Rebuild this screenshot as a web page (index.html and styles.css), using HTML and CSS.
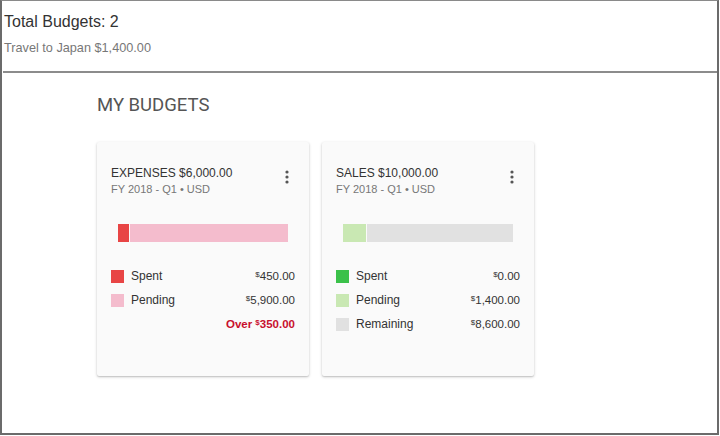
FILE: index.html
```html
<!DOCTYPE html>
<html>
<head>
<meta charset="utf-8">
<link rel="stylesheet" href="styles.css">
</head>
<body>
<div class="frame">
  <header class="summary">
    <div class="summary-title">Total Budgets: 2</div>
    <div class="summary-sub">Travel to Japan $1,400.00</div>
  </header>
  <main class="content">
    <h1 class="section-title">MY BUDGETS</h1>
    <div class="cards">
      <div class="card">
        <div class="card-head">
          <div>
            <div class="card-title">EXPENSES $6,000.00</div>
            <div class="card-sub">FY 2018 - Q1 &bull; USD</div>
          </div>
          <svg class="menu" width="4" height="14" viewBox="0 0 4 14"><circle cx="2" cy="2" r="1.6" fill="#555"/><circle cx="2" cy="7" r="1.6" fill="#555"/><circle cx="2" cy="12" r="1.6" fill="#555"/></svg>
        </div>
        <div class="bar">
          <div class="seg red" style="width:11px"></div>
          <div class="seg pink" style="flex:1"></div>
        </div>
        <div class="legend">
          <div class="row"><span class="sw red"></span><span class="lbl">Spent</span><span class="val"><sup>$</sup>450.00</span></div>
          <div class="row"><span class="sw pink"></span><span class="lbl">Pending</span><span class="val"><sup>$</sup>5,900.00</span></div>
          <div class="row"><span class="lbl"></span><span class="val over">Over <sup>$</sup>350.00</span></div>
        </div>
      </div>
      <div class="card">
        <div class="card-head">
          <div>
            <div class="card-title">SALES $10,000.00</div>
            <div class="card-sub">FY 2018 - Q1 &bull; USD</div>
          </div>
          <svg class="menu" width="4" height="14" viewBox="0 0 4 14"><circle cx="2" cy="2" r="1.6" fill="#555"/><circle cx="2" cy="7" r="1.6" fill="#555"/><circle cx="2" cy="12" r="1.6" fill="#555"/></svg>
        </div>
        <div class="bar">
          <div class="seg lgreen" style="width:23px"></div>
          <div class="seg grey" style="flex:1"></div>
        </div>
        <div class="legend">
          <div class="row"><span class="sw green"></span><span class="lbl">Spent</span><span class="val"><sup>$</sup>0.00</span></div>
          <div class="row"><span class="sw lgreen"></span><span class="lbl">Pending</span><span class="val"><sup>$</sup>1,400.00</span></div>
          <div class="row"><span class="sw grey"></span><span class="lbl">Remaining</span><span class="val"><sup>$</sup>8,600.00</span></div>
        </div>
      </div>
    </div>
  </main>
</div>
</body>
</html>
```
FILE: styles.css
```css
* { box-sizing: border-box; }
html, body { margin: 0; padding: 0; background: #fff; }
body { font-family: "Liberation Sans", Arial, sans-serif; color: #333; }
.frame {
  width: 719px; height: 435px;
  border: 2px solid #6b6b6b;
  border-top: 1px solid #8a8a8a;
  padding-left: 1px;
  display: flex; flex-direction: column;
}
.summary {
  height: 72px;
  border-bottom: 2px solid #8c8c8c;
  padding: 11px 0 0 1px;
}
.summary-title { font-size: 16px; line-height: 20px; color: #333; }
.summary-sub { font-size: 12.7px; line-height: 16px; color: #777; margin-top: 8px; }
.content { padding: 21px 0 0 94px; }
.section-title {
  margin: 0; font-family: Roboto, "Liberation Sans", sans-serif;
  font-weight: 400; font-size: 18.5px; line-height: 22px; color: #555;
}
.cards { display: flex; gap: 13px; margin-top: 26px; }
.card {
  width: 212px; height: 234px;
  background: #fafafa;
  border-radius: 2px;
  box-shadow: 0 1px 3px rgba(0,0,0,0.22), 0 1px 1px rgba(0,0,0,0.08);
  padding: 23px 14px 0 14px;
}
.card-head { display: flex; justify-content: space-between; align-items: flex-start; }
.card-title { font-size: 12px; line-height: 16px; color: #333; }
.card-sub { font-size: 11px; line-height: 16px; color: #777; }
.menu { margin: 5px 6px 0 0; }
.bar { display: flex; height: 18px; margin: 27px 7px 0 7px; gap: 1px; }
.seg { height: 18px; }
.red { background: #e84545; }
.pink { background: #f4bccd; }
.lgreen { background: #c9e8b3; }
.grey { background: #e1e1e1; }
.green { background: #3bc14a; }
.legend { margin-top: 22px; }
.row { display: flex; align-items: center; height: 24px; font-size: 12px; }
.sw { width: 13px; height: 13px; margin-right: 7px; flex: none; }
.lbl { flex: 1; color: #333; }
.val { color: #333; font-size: 11.5px; }
.val sup { font-size: 8px; vertical-align: 3px; }
.over { color: #c8102e; font-weight: 700; }
```
